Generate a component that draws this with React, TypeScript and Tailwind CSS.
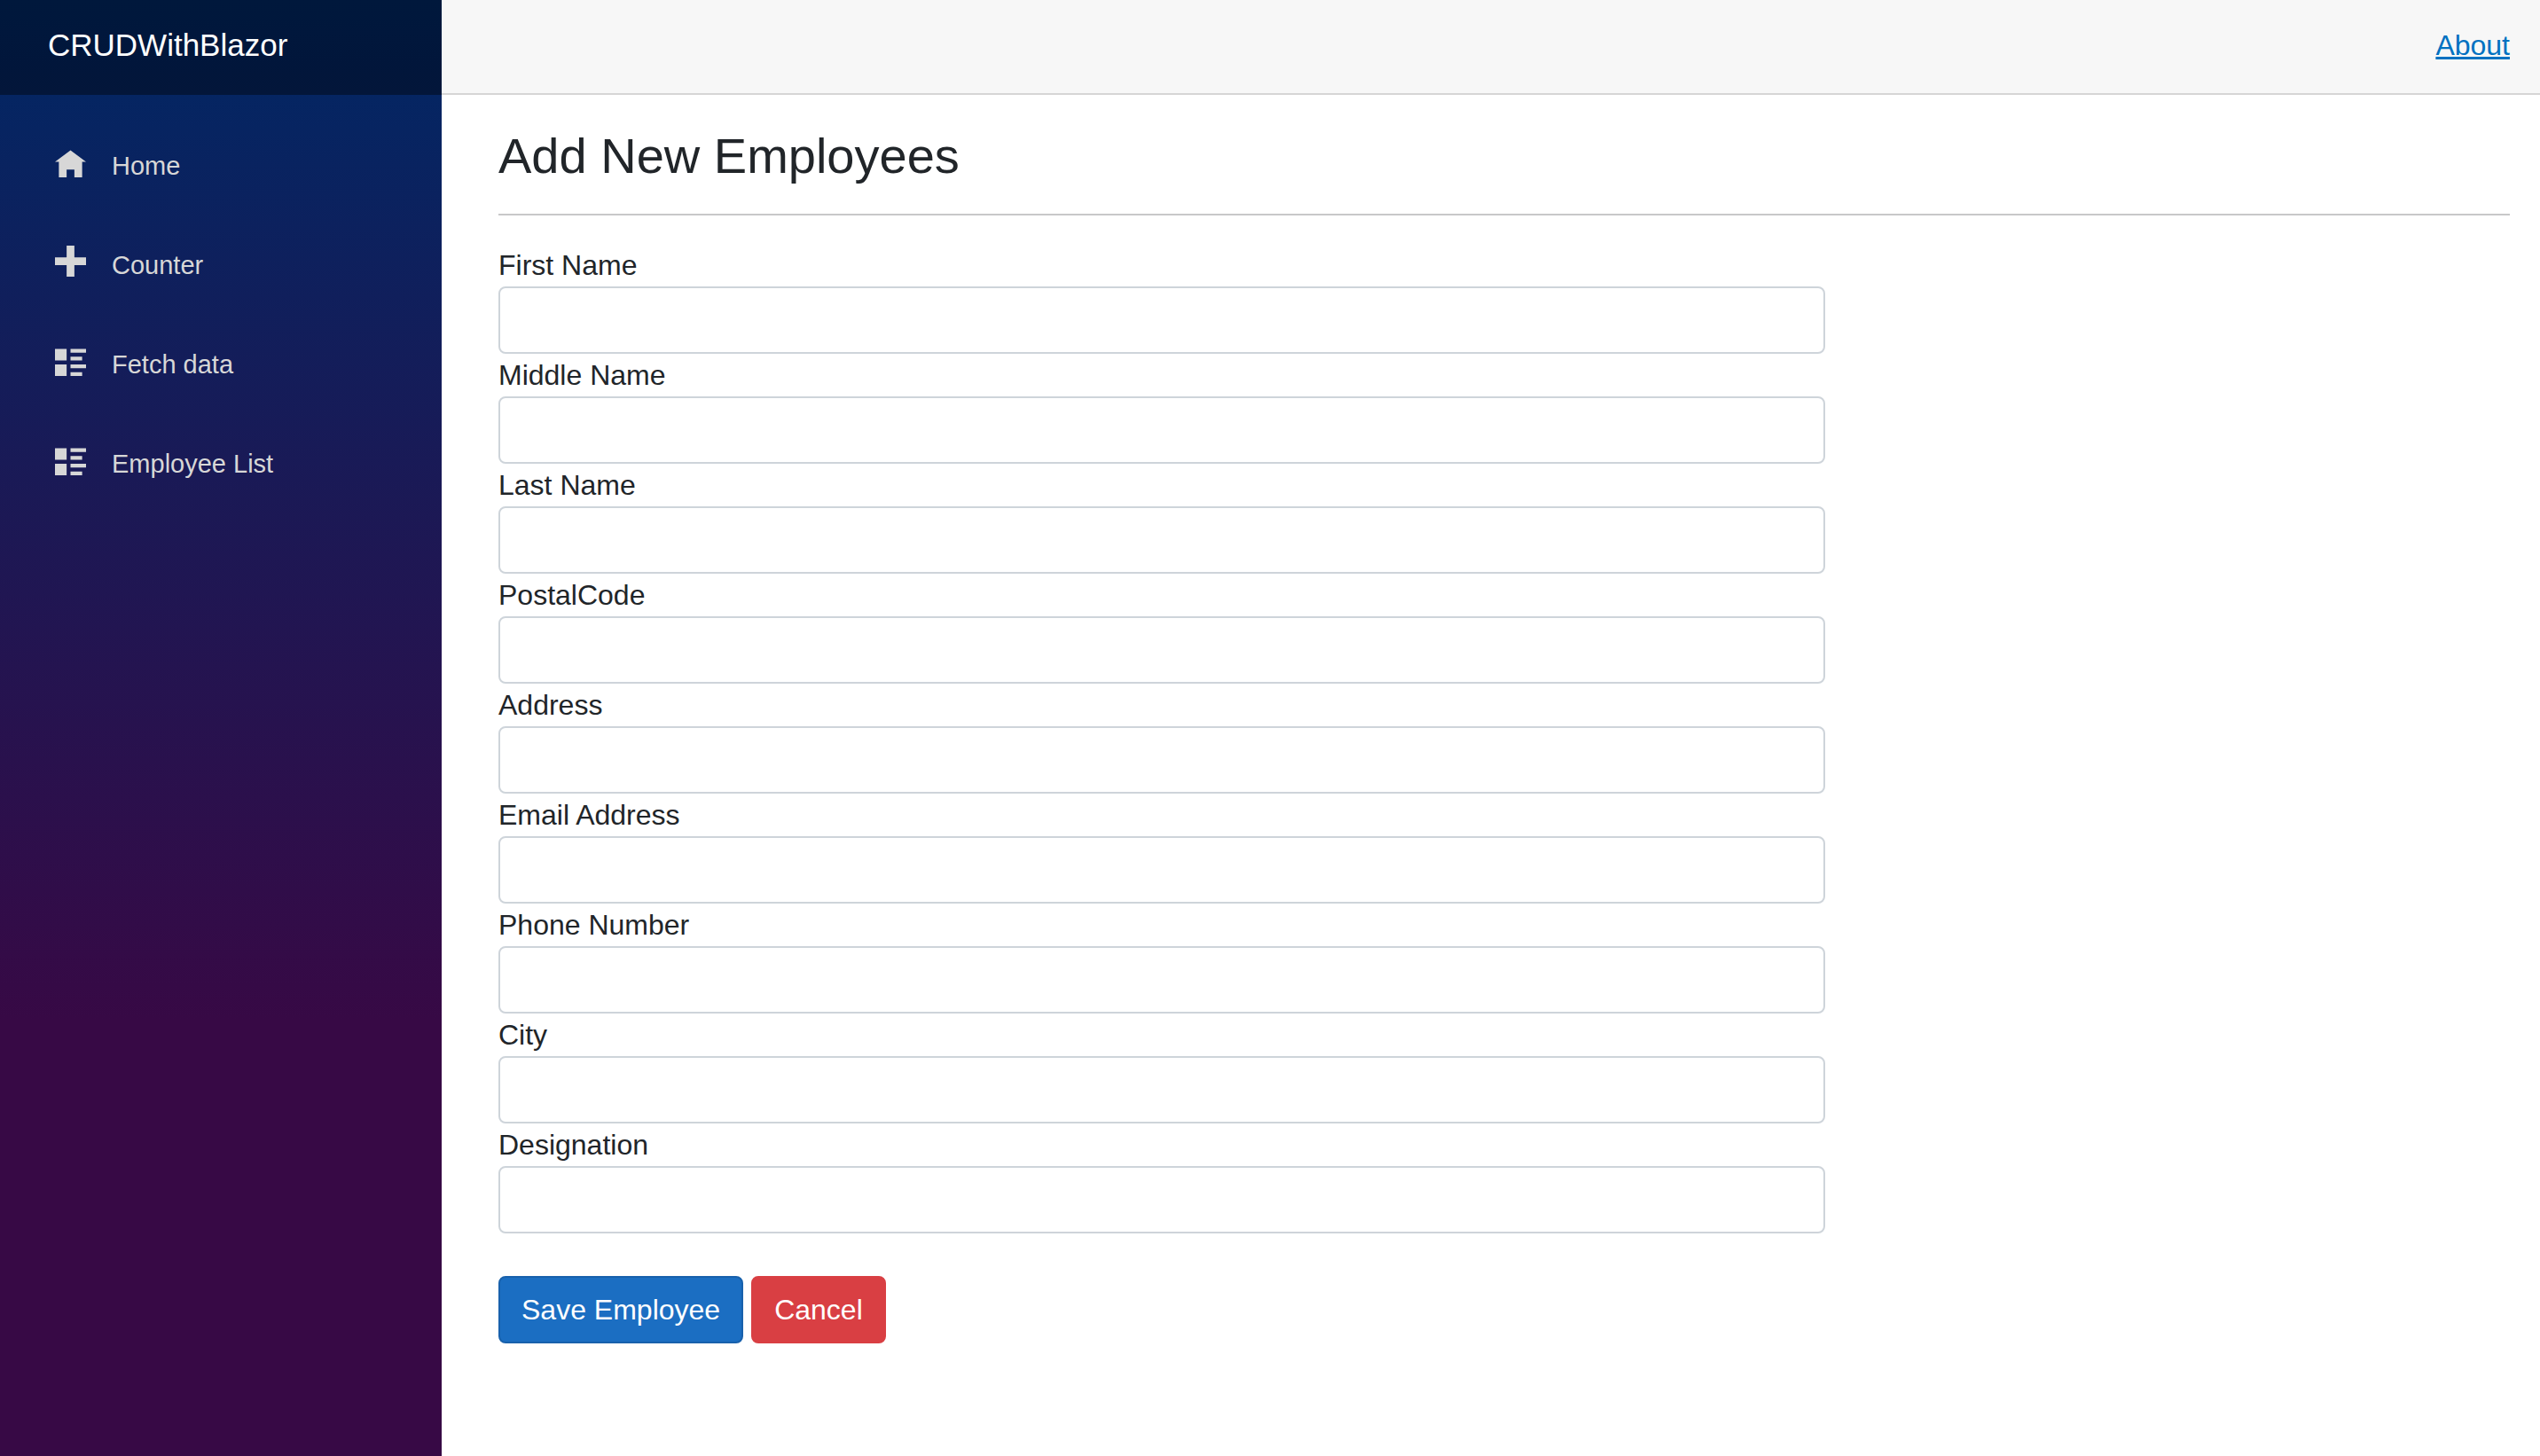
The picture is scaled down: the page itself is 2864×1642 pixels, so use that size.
import React from "react";

const HOME = "M4 1l-4 3h1v4h2v-2h2v2h2v-4h1l-4-3z";
const PLUS = "M3 0v3h-3v2h3v3h2v-3h3v-2h-3v-3h-2z";
const LIST =
  "M0 1v3h3v-3h-3zM4 1v1h4v-1h-4zM4 3v1h3v-1h-3zM0 5v3h3v-3h-3zM4 5v1h4v-1h-4zM4 7v1h3v-1h-3z";

const navItems = [
  { label: "Home", icon: HOME },
  { label: "Counter", icon: PLUS },
  { label: "Fetch data", icon: LIST },
  { label: "Employee List", icon: LIST },
];

const fields = [
  { id: "firstName", label: "First Name" },
  { id: "middleName", label: "Middle Name" },
  { id: "lastName", label: "Last Name" },
  { id: "postalCode", label: "PostalCode" },
  { id: "address", label: "Address" },
  { id: "email", label: "Email Address" },
  { id: "phone", label: "Phone Number" },
  { id: "city", label: "City" },
  { id: "designation", label: "Designation" },
];

function Sidebar() {
  return (
    <aside className="w-[498px] shrink-0 bg-[linear-gradient(180deg,#002865_0%,#370945_70%)]">
      <div className="flex h-[107px] items-center bg-black/40 pb-1.5 pl-[54px]">
        <a href="#" className="text-[35px] leading-[52px] text-white">
          CRUDWithBlazor
        </a>
      </div>
      <nav className="flex flex-col gap-4 px-[30px] pt-8">
        {navItems.map((item) => (
          <a
            key={item.label}
            href="#"
            className="flex h-24 items-center rounded-lg px-8 text-[29px] text-[#d7d7d7]"
          >
            <span className="mb-2.5 w-16 shrink-0">
              <svg viewBox="0 0 8 8" className="size-[35px] fill-current" aria-hidden="true">
                <path d={item.icon} />
              </svg>
            </span>
            {item.label}
          </a>
        ))}
      </nav>
    </aside>
  );
}

function EmployeeForm() {
  return (
    <form onSubmit={(e) => e.preventDefault()}>
      <div className="-mx-6">
        <div className="w-2/3 px-6">
          {fields.map((field) => (
            <div key={field.id}>
              <label htmlFor={field.id} className="block">
                {field.label}
              </label>
              <input
                id={field.id}
                type="text"
                className="block h-[76px] w-full rounded-lg border-2 border-[#ced4da] bg-white px-6"
              />
            </div>
          ))}
        </div>
      </div>
      <div className="flex gap-[9px] pt-12">
        <button
          type="submit"
          className="h-[76px] rounded-lg border-2 border-[#1861ac] bg-[#1b6ec2] px-6 text-white"
        >
          Save Employee
        </button>
        <button
          type="button"
          className="h-[76px] rounded-lg border-2 border-[#d93f43] bg-[#d93f43] px-6 text-white"
        >
          Cancel
        </button>
      </div>
    </form>
  );
}

export default function App() {
  return (
    <div className="flex min-h-screen bg-white font-['Liberation_Sans',Arial,sans-serif] text-[32px] leading-[48px] text-[#212529]">
      <Sidebar />
      <main className="min-w-0 flex-1">
        <header className="flex h-[107px] items-center justify-end border-b-2 border-[#d6d5d5] bg-[#f7f7f7] pr-[34px] pb-1">
          <a href="#" className="text-[#0071c1] underline">
            About
          </a>
        </header>
        <article className="pt-[35px] pr-[34px] pl-16">
          <h3 className="text-[56px] leading-[67px]">Add New Employees</h3>
          <hr className="my-8 border-t-2 border-[#c8c8c9]" />
          <EmployeeForm />
        </article>
      </main>
    </div>
  );
}
